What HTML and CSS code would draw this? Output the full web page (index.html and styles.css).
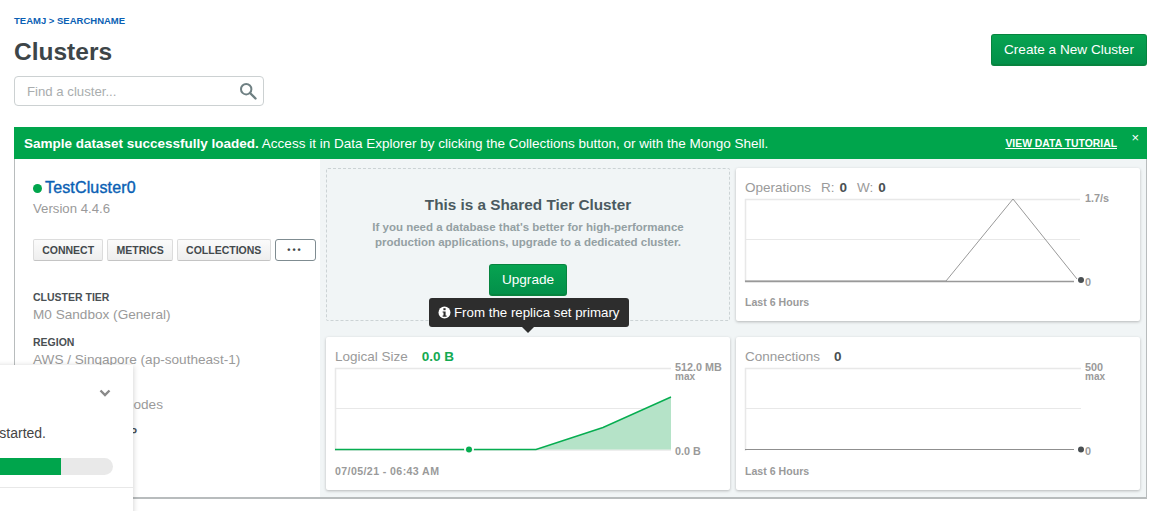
FILE: index.html
```html
<!DOCTYPE html>
<html lang="en">

<head>
  <meta charset="UTF-8">
  <title>Clusters</title>
  <link rel="stylesheet" href="styles.css">
</head>

<body>
  <main class="page">
    <header class="page__head">
      <div>
        <p class="crumbs">TEAMJ &gt; SEARCHNAME</p>
        <h1 class="title">Clusters</h1>
        <div class="search">
          <span class="search__hint">Find a cluster...</span>
          <svg class="search__icon" width="18" height="18" viewBox="0 0 18 18">
            <circle cx="7.2" cy="7.2" r="5.2" fill="none" stroke="#6f8083" stroke-width="2" />
            <path d="M11 11l5.5 5.5" stroke="#6f8083" stroke-width="2.4" stroke-linecap="round" />
          </svg>
        </div>
      </div>
      <a class="btn-green btn-green--new">Create a New Cluster</a>
    </header>

    <div class="banner">
      <p><b>Sample dataset successfully loaded.</b> Access it in Data Explorer by clicking the Collections button, or with the Mongo Shell.</p>
      <a class="banner__link">VIEW DATA TUTORIAL</a>
      <span class="banner__close">&times;</span>
    </div>

    <section class="cluster">
      <aside class="info">
        <h2 class="info__name"><span class="dot"></span>TestCluster0</h2>
        <p class="info__version">Version 4.4.6</p>
        <div class="actions">
          <button class="action">CONNECT</button>
          <button class="action">METRICS</button>
          <button class="action">COLLECTIONS</button>
          <button class="action action--more">&bull;&bull;&bull;</button>
        </div>
        <dl class="facts">
          <dt>CLUSTER TIER</dt>
          <dd>M0 Sandbox (General)</dd>
          <dt>REGION</dt>
          <dd>AWS / Singapore (ap-southeast-1)</dd>
          <dt>TYPE</dt>
          <dd>Replica Set - 3 nodes</dd>
          <dt>LINKED STITCH APP</dt>
        </dl>
      </aside>

      <div class="tiles">
        <div class="tile tile--upgrade">
          <h3>This is a Shared Tier Cluster</h3>
          <p>If you need a database that's better for high-performance production applications, upgrade to a dedicated cluster.</p>
          <a class="btn-green btn-green--upgrade">Upgrade</a>
        </div>

        <div class="tile">
          <div class="tile__head">Operations<span class="tile__pair">R:</span><b>0</b><span class="tile__pair">W:</span><b>0</b></div>
          <div class="chart">
            <svg width="336" height="84" viewBox="0 0 336 84">
              <path d="M0.5 84V1.5H335" fill="none" stroke="#e8e8e8" stroke-width="1.5" />
              <path d="M1 41.5H335" stroke="#e8e8e8" />
              <path d="M0 83H201L268 1L332 81" fill="none" stroke="#999" stroke-width="1" />
              <path d="M0 83.5H329" stroke="#999" stroke-width="1.5" />
              <circle cx="336" cy="82" r="3" fill="#494f52" />
            </svg>
            <div class="chart__labels"><span>1.7/s</span><span>0</span></div>
          </div>
          <p class="tile__foot">Last 6 Hours</p>
        </div>

        <div class="tile">
          <div class="tile__head">Logical Size<b class="tile__value tile__value--green">0.0 B</b></div>
          <div class="chart">
            <svg width="336" height="84" viewBox="0 0 336 84">
              <path d="M0.5 84V1.5H336" fill="none" stroke="#e8e8e8" stroke-width="1.5" />
              <path d="M1 41.5H336" stroke="#e8e8e8" />
              <path d="M0 83H336" stroke="#e8e8e8" stroke-width="1.5" />
              <path d="M201 82.5L268 60.5L336 30V82.5Z" fill="#b5e3c8" />
              <path d="M0 82.5H129M139 82.5H201L268 60.5L336 30" fill="none" stroke="#06ad50" stroke-width="1.4" />
              <circle cx="134" cy="82.5" r="3" fill="#06ad50" />
            </svg>
            <div class="chart__labels">
              <span class="chart__max">512.0 MB<small>max</small></span><span>0.0 B</span>
            </div>
          </div>
          <p class="tile__foot tile__foot--date">07/05/21 - 06:43 AM</p>
        </div>

        <div class="tile">
          <div class="tile__head">Connections<b class="tile__value">0</b></div>
          <div class="chart">
            <svg width="336" height="84" viewBox="0 0 336 84">
              <path d="M0.5 84V1.5H336" fill="none" stroke="#e8e8e8" stroke-width="1.5" />
              <path d="M1 41.5H336" stroke="#e8e8e8" />
              <path d="M0 82.5H329" stroke="#8f8f8f" stroke-width="1.2" />
              <circle cx="336" cy="82.5" r="3" fill="#494f52" />
            </svg>
            <div class="chart__labels">
              <span class="chart__max">500<small>max</small></span><span>0</span>
            </div>
          </div>
          <p class="tile__foot">Last 6 Hours</p>
        </div>

        <div class="tip"><svg width="13" height="13" viewBox="0 0 13 13">
            <circle cx="6.5" cy="6.5" r="6" fill="#fff" />
            <rect x="5.4" y="2.2" width="2.2" height="2" fill="#2d2d2d" />
            <path d="M4.6 5.4H7.6V9.6H8.6V10.8H4.6V9.6H5.5V6.6H4.6Z" fill="#2d2d2d" />
          </svg>From the replica set primary</div>
      </div>
    </section>
  </main>

  <div class="toast">
    <svg class="toast__chevron" width="12" height="8" viewBox="0 0 12 8">
      <path d="M1.5 1.5L6 6L10.5 1.5" fill="none" stroke="#8a8a8a" stroke-width="2.4" />
    </svg>
    <p class="toast__text">Get started.</p>
    <div class="toast__bar">
      <div class="toast__fill"></div>
    </div>
  </div>
</body>

</html>
```
FILE: styles.css
```css
:root {
  --clr-green: #00a54c;
  --clr-blue: #0a5fb4;
  --clr-grey: #9a9a9a;
  --clr-dark: #3d4548;
  --clr-pale: #f1f5f6;
  --fnt-main: "Liberation Sans", Arial, sans-serif;
}

* {
  box-sizing: border-box;
  margin: 0;
  padding: 0;
}

html,
body {
  height: 511px;
  overflow: hidden;
}

body {
  font-family: var(--fnt-main);
  background-color: #fff;
  color: var(--clr-dark);
}

.page {
  padding: 15px 3px 0 14px;
}

.page__head {
  display: flex;
  justify-content: space-between;
  align-items: flex-start;
  height: 112px;
}

.crumbs {
  font-size: 9.5px;
  line-height: 11px;
  font-weight: 700;
  color: var(--clr-blue);
}

.title {
  margin-top: 9px;
  font-size: 24.5px;
  line-height: 34px;
  font-weight: 700;
  color: var(--clr-dark);
}

.search {
  display: flex;
  align-items: center;
  justify-content: space-between;
  width: 250px;
  height: 30px;
  margin-top: 7px;
  padding: 0 6px 0 12px;
  border: 1px solid #ccd1d2;
  border-radius: 4px;
}

.search__hint {
  font-size: 13.2px;
  color: #a9adae;
}

.btn-green {
  display: block;
  text-align: center;
  color: #fff;
  background: linear-gradient(#07a351, #03904a);
  border: 1px solid #07843f;
  border-bottom-width: 2px;
  border-radius: 3px;
}

.btn-green--new {
  width: 156px;
  height: 32px;
  margin-top: 19px;
  font-size: 13.6px;
  line-height: 30px;
}

.btn-green--upgrade {
  width: 78px;
  height: 32px;
  margin: 14px auto 0;
  font-size: 13.6px;
  line-height: 30px;
}

.banner {
  position: relative;
  display: flex;
  align-items: center;
  justify-content: space-between;
  height: 32px;
  padding: 0 30px 0 10px;
  font-size: 13.5px;
  color: #fff;
  background-color: var(--clr-green);
}

.banner__link {
  font-size: 10.4px;
  font-weight: 700;
  text-decoration: underline;
}

.banner__close {
  position: absolute;
  top: 4px;
  right: 8px;
  font-size: 13px;
  line-height: 14px;
}

.cluster {
  display: flex;
  height: 340px;
  border: 1px solid #b8bcbd;
  border-top: 0;
  border-bottom-width: 2px;
  background-color: var(--clr-pale);
}

.info {
  flex: none;
  width: 305px;
  padding: 20px 0 0 18px;
  background-color: #fff;
}

.info__name {
  display: flex;
  align-items: center;
  gap: 3px;
  font-size: 16px;
  line-height: 18px;
  font-weight: 400;
  letter-spacing: .15px;
  -webkit-text-stroke: .4px var(--clr-blue);
  color: var(--clr-blue);
}

.dot {
  width: 9px;
  height: 9px;
  border-radius: 50%;
  background-color: var(--clr-green);
}

.info__version {
  margin-top: 3px;
  font-size: 13.2px;
  line-height: 18px;
  color: var(--clr-grey);
}

.actions {
  display: flex;
  gap: 4px;
  margin-top: 21px;
}

.action {
  height: 22px;
  padding: 0 8.2px;
  font-family: var(--fnt-main);
  font-size: 10.5px;
  font-weight: 700;
  color: #43494c;
  background: linear-gradient(#fbfbfb, #eeeeee);
  border: 1px solid #dcdcdc;
  border-bottom-color: #c4c4c4;
  border-radius: 2px;
}

.action--more {
  width: 41px;
  padding: 0;
  font-size: 9px;
  letter-spacing: 2px;
  background: #fff;
  border: 1px solid #7f8c91;
  border-radius: 3px;
}

.facts {
  margin-top: 30px;
}

.facts dt {
  margin-top: 12px;
  font-size: 10.5px;
  line-height: 13px;
  font-weight: 700;
  color: #4a5053;
}

.facts dd {
  margin-top: 1px;
  font-size: 13.6px;
  line-height: 19px;
  color: var(--clr-grey);
}

.tiles {
  position: relative;
  flex: 1;
  display: grid;
  grid-template-columns: 404px 404px;
  grid-template-rows: 153px 153px;
  gap: 16px 6px;
  padding: 9px 0 0 6px;
}

.tile {
  padding: 12px 9px 0;
  background-color: #fff;
  border-radius: 2px;
  box-shadow: 0 1px 3px rgba(0, 0, 0, .25);
}

.tile--upgrade {
  padding: 27px 40px 0;
  text-align: center;
  background-color: transparent;
  border: 1px dashed #ccd3d5;
  box-shadow: none;
}

.tile--upgrade h3 {
  font-size: 15.3px;
  line-height: 17px;
  font-weight: 700;
  color: #4b5a60;
}

.tile--upgrade p {
  margin-top: 7px;
  font-size: 11.5px;
  line-height: 15px;
  font-weight: 700;
  color: #94a0a3;
}

.tile__head {
  display: flex;
  align-items: baseline;
  height: 18px;
  font-size: 13.5px;
  line-height: 15px;
  color: var(--clr-grey);
}

.tile__head b {
  margin-left: 5px;
  color: #4a4f52;
}

.tile__pair {
  margin-left: 10px;
}

.tile__head b.tile__value {
  margin-left: 14px;
}

.tile__head b.tile__value--green {
  color: #13aa52;
}

.chart {
  display: flex;
  gap: 4px;
}

.chart svg {
  flex: none;
  display: block;
  overflow: visible;
}

.chart__labels {
  display: flex;
  flex-direction: column;
  justify-content: space-between;
  margin: -5px 0 -6px;
  font-size: 10.8px;
  line-height: 11px;
  font-weight: 700;
  white-space: nowrap;
  color: var(--clr-grey);
}

.chart__labels small {
  display: block;
  font-size: 10px;
  line-height: 8px;
}

.tile__foot {
  margin-top: 14px;
  font-size: 10.6px;
  line-height: 13px;
  font-weight: 700;
  color: var(--clr-grey);
}

.tile__foot--date {
  letter-spacing: .4px;
}

/* sits on top of the tiles */
.tip {
  position: absolute;
  top: 139px;
  left: 109px;
  display: flex;
  align-items: center;
  gap: 3px;
  height: 29px;
  padding: 0 9px;
  font-size: 13.3px;
  color: #fff;
  background-color: #2d2d2d;
  border-radius: 3px;
}

.tip::after {
  content: '';
  position: absolute;
  left: 93px;
  bottom: -6px;
  border: 6px solid transparent;
  border-bottom: 0;
  border-top-color: #2d2d2d;
}

.toast {
  position: absolute;
  left: -180px;
  top: 365px;
  width: 313px;
  height: 160px;
  background-color: #fff;
  box-shadow: 0 1px 6px rgba(0, 0, 0, .2);
}

.toast__chevron {
  position: absolute;
  left: 279px;
  top: 24px;
}

.toast__text {
  position: absolute;
  right: 87px;
  top: 60px;
  font-size: 14px;
  line-height: 17px;
  color: #444;
}

.toast__bar {
  position: absolute;
  left: 20px;
  right: 20px;
  top: 93px;
  height: 17px;
  background-color: #e9e9e9;
  border-radius: 9px;
  overflow: hidden;
}

.toast__fill {
  width: 81%;
  height: 100%;
  background-color: var(--clr-green);
}

.toast::after {
  content: '';
  position: absolute;
  left: 0;
  right: 0;
  top: 122px;
  border-top: 1px solid #e8e8e8;
}
```
